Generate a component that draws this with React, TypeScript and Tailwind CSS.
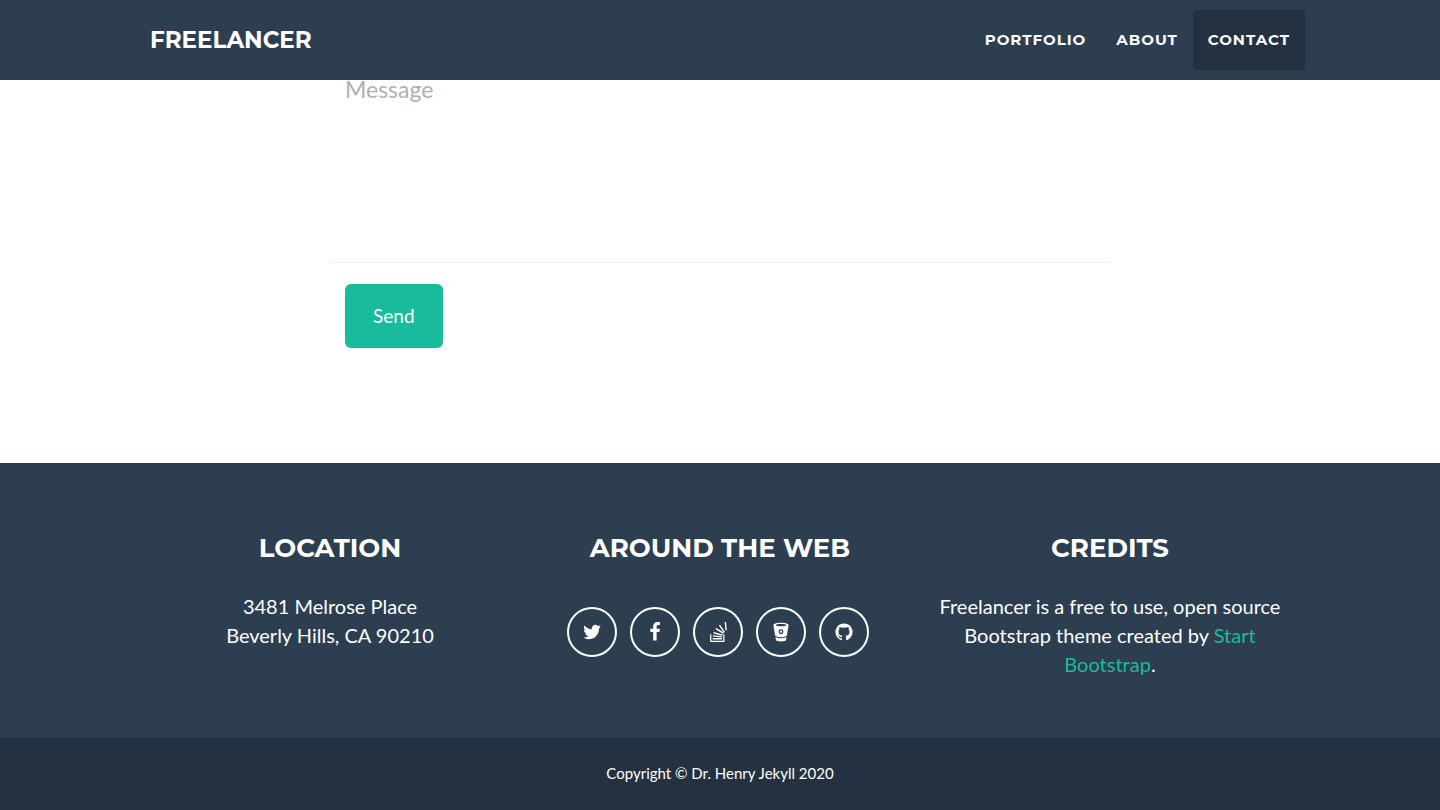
import type { ReactNode } from "react";

const heading = "font-['Montserrat','Inter',sans-serif] uppercase";

const navLinks = [
  { label: "Portfolio", href: "#portfolio", active: false },
  { label: "About", href: "#about", active: false },
  { label: "Contact", href: "#contact", active: true },
];

const socialLinks = [
  {
    name: "Twitter",
    path: "M1684 408q-67 98-162 167 1 14 1 42 0 130-38 259.5t-115.5 248.5-184.5 210.5-258 146-323 54.5q-271 0-496-145 35 4 78 4 225 0 401-138-105-2-188-64.5t-114-159.5q33 5 61 5 43 0 85-11-112-23-185.5-111.5t-73.5-205.5v-4q68 38 146 41-66-44-105-115t-39-154q0-88 44-163 121 149 294.5 238.5t371.5 99.5q-8-38-8-74 0-134 94.5-228.5t228.5-94.5q140 0 236 102 109-21 205-78-37 115-142 178 93-10 186-50z",
  },
  {
    name: "Facebook",
    path: "M1343 12v264h-157q-86 0-116 36t-30 108v189h293l-39 296h-254v759h-306v-759h-255v-296h255v-218q0-186 104-288.5t277-102.5q147 0 228 12z",
  },
  {
    name: "Stack Overflow",
    path: "M190 1090h110v590h1060v-590h110v700h-1280zM420 1440h820v125h-820zM440 1190l820 85-13 120-820-85zM520 900l790 215-34 120-790-215zM740 540l670 400-70 110-670-400zM1080 240l440 650-104 70-440-650zM1490 0h125l75 730-125 12z",
  },
  {
    name: "Bitbucket",
    path: "M896 64C500 64 220 150 220 270q0 60 10 110l135 800q10 50 50 70 190 110 481 110t481-110q40-20 50-70l135-800q10-50 10-110C1572 150 1292 64 896 64zM896 190c260 0 460 40 460 90s-200 90-460 90-460-40-460-90 200-90 460-90zM896 650a220 220 0 1 1 0 440 220 220 0 1 1 0-440zM896 770a100 100 0 1 0 0 200 100 100 0 1 0 0-200zM390 1340q210 110 506 110t506-110l-60 270q-10 50-60 70-170 70-386 70t-386-70q-50-20-60-70z",
  },
  {
    name: "GitHub",
    path: "M896 128q209 0 385.5 103t279.5 279.5 103 385.5q0 251-146.5 451.5t-378.5 277.5q-27 5-40-7t-13-30q0-3 .5-76.5t.5-134.5q0-97-52-142 57-6 102.5-18t94-39 81-66.5 53-105 20.5-150.5q0-119-79-206 37-91-8-204-28-9-81 11t-92 44l-38 24q-93-26-192-26t-192 26q-16-11-42.5-27t-83.5-38.5-85-13.5q-45 113-8 204-79 87-79 206 0 85 20.5 150t52.5 105 80.5 67 94 39 102.5 18q-39 36-49 103-21 10-45 15t-57 5-65.5-21.5-55.5-62.5q-19-32-48.5-52t-49.5-24l-20-3q-21 0-29 4.5t-5 11.5 9 14 13 12l7 5q22 10 43.5 38t31.5 51l10 23q13 38 44 61.5t67 30 69.5 7 55.5-3.5l23-4q0 38 .5 88.5t.5 54.5q0 18-13 30t-40 7q-232-77-378.5-277.5t-146.5-451.5q0-209 103-385.5t279.5-279.5 385.5-103z",
  },
];

function Navbar() {
  return (
    <header className="sticky top-0 z-10 bg-[#2c3e50] text-white">
      <nav className="mx-auto flex h-20 max-w-[1170px] items-center justify-between pl-[15px]">
        <a href="#page-top" className={`${heading} text-[23px] font-bold`}>
          Freelancer
        </a>
        {/* the links hang over the container gutter */}
        <ul className="flex">
          {navLinks.map((link) => (
            <li key={link.label}>
              <a
                href={link.href}
                className={`${heading} flex h-15 items-center px-[15px] text-[15px] font-bold tracking-[1px] ${
                  link.active ? "bg-[#233140]" : ""
                }`}
              >
                {link.label}
              </a>
            </li>
          ))}
        </ul>
      </nav>
    </header>
  );
}

function ContactForm() {
  return (
    <section id="contact" className="bg-white px-4 pb-[115px]">
      <form className="mx-auto max-w-[780px]" onSubmit={(e) => e.preventDefault()}>
        <div className="border-b border-[#eeeeee]">
          <label htmlFor="message" className="sr-only">
            Message
          </label>
          <textarea
            id="message"
            placeholder="Message"
            className="block h-[182px] w-full resize-none px-[15px] text-[23px] leading-[18px] outline-none placeholder:text-[#aeb1b5]"
          />
        </div>
        <button
          type="submit"
          className="mt-[21px] ml-[15px] h-16 rounded-md bg-[#18bc9c] px-7 text-[19px] text-white"
        >
          Send
        </button>
      </form>
    </section>
  );
}

function FooterColumn({ title, children }: { title: string; children: ReactNode }) {
  return (
    <div className="px-[15px] text-center">
      <h3 className={`${heading} mb-[30px] text-[26px] leading-7 font-bold`}>{title}</h3>
      {children}
    </div>
  );
}

function Footer() {
  return (
    <footer className="flex grow flex-col text-white">
      <div className="bg-[#2c3e50] pt-[71px] pb-[59px]">
        <div className="mx-auto grid max-w-[1170px] grid-cols-1 gap-y-12 text-xl leading-[29px] md:grid-cols-3">
          <FooterColumn title="Location">
            <p>
              3481 Melrose Place
              <br />
              Beverly Hills, CA 90210
            </p>
          </FooterColumn>
          <FooterColumn title="Around the Web">
            <ul className="mt-[45px] flex justify-center gap-[13px] pr-[5px]">
              {socialLinks.map((link) => (
                <li key={link.name}>
                  <a
                    href="#"
                    aria-label={link.name}
                    className="flex size-[50px] items-center justify-center rounded-full border-2 border-white"
                  >
                    <svg viewBox="0 0 1792 1792" className="size-5" fill="currentColor">
                      <path d={link.path} fillRule={link.name === "Bitbucket" ? "evenodd" : "nonzero"} />
                    </svg>
                  </a>
                </li>
              ))}
            </ul>
          </FooterColumn>
          <FooterColumn title="Credits">
            <p>
              Freelancer is a free to use, open source Bootstrap theme created by{" "}
              <a href="#" className="text-[#18bc9c]">
                Start Bootstrap
              </a>
              .
            </p>
          </FooterColumn>
        </div>
      </div>
      <div className="grow bg-[#233140] py-6 text-center text-[15px] leading-[22px]">
        Copyright © Dr. Henry Jekyll 2020
      </div>
    </footer>
  );
}

export default function App() {
  return (
    <div className="flex min-h-screen flex-col bg-white font-['Lato',sans-serif]">
      <Navbar />
      <ContactForm />
      <Footer />
    </div>
  );
}
